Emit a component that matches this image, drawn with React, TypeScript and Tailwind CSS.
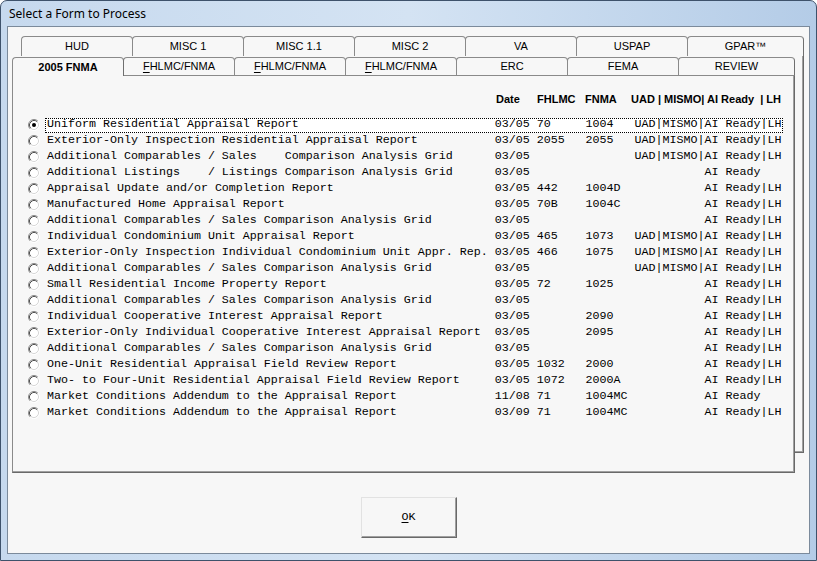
import React from 'react';

type Row = {
  name: string;
  date: string;
  fhlmc: string;
  fnma: string;
  uad: boolean;
  lh: boolean;
};

const rows: Row[] = [
  { name: 'Uniform Residential Appraisal Report', date: '03/05', fhlmc: '70', fnma: '1004', uad: true, lh: true },
  { name: 'Exterior-Only Inspection Residential Appraisal Report', date: '03/05', fhlmc: '2055', fnma: '2055', uad: true, lh: true },
  { name: 'Additional Comparables / Sales    Comparison Analysis Grid', date: '03/05', fhlmc: '', fnma: '', uad: true, lh: true },
  { name: 'Additional Listings    / Listings Comparison Analysis Grid', date: '03/05', fhlmc: '', fnma: '', uad: false, lh: false },
  { name: 'Appraisal Update and/or Completion Report', date: '03/05', fhlmc: '442', fnma: '1004D', uad: false, lh: true },
  { name: 'Manufactured Home Appraisal Report', date: '03/05', fhlmc: '70B', fnma: '1004C', uad: false, lh: true },
  { name: 'Additional Comparables / Sales Comparison Analysis Grid', date: '03/05', fhlmc: '', fnma: '', uad: false, lh: true },
  { name: 'Individual Condominium Unit Appraisal Report', date: '03/05', fhlmc: '465', fnma: '1073', uad: true, lh: true },
  { name: 'Exterior-Only Inspection Individual Condominium Unit Appr. Rep.', date: '03/05', fhlmc: '466', fnma: '1075', uad: true, lh: true },
  { name: 'Additional Comparables / Sales Comparison Analysis Grid', date: '03/05', fhlmc: '', fnma: '', uad: true, lh: true },
  { name: 'Small Residential Income Property Report', date: '03/05', fhlmc: '72', fnma: '1025', uad: false, lh: true },
  { name: 'Additional Comparables / Sales Comparison Analysis Grid', date: '03/05', fhlmc: '', fnma: '', uad: false, lh: true },
  { name: 'Individual Cooperative Interest Appraisal Report', date: '03/05', fhlmc: '', fnma: '2090', uad: false, lh: true },
  { name: 'Exterior-Only Individual Cooperative Interest Appraisal Report', date: '03/05', fhlmc: '', fnma: '2095', uad: false, lh: true },
  { name: 'Additional Comparables / Sales Comparison Analysis Grid', date: '03/05', fhlmc: '', fnma: '', uad: false, lh: true },
  { name: 'One-Unit Residential Appraisal Field Review Report', date: '03/05', fhlmc: '1032', fnma: '2000', uad: false, lh: true },
  { name: 'Two- to Four-Unit Residential Appraisal Field Review Report', date: '03/05', fhlmc: '1072', fnma: '2000A', uad: false, lh: true },
  { name: 'Market Conditions Addendum to the Appraisal Report', date: '11/08', fhlmc: '71', fnma: '1004MC', uad: false, lh: false },
  { name: 'Market Conditions Addendum to the Appraisal Report', date: '03/09', fhlmc: '71', fnma: '1004MC', uad: false, lh: true },
];

// every row is one fixed-width line, like the old list box
const toLine = (r: Row) =>
  r.name.padEnd(64) +
  r.date +
  ' ' +
  r.fhlmc.padEnd(7) +
  r.fnma.padEnd(7) +
  (r.uad ? 'UAD|MISMO|' : ' '.repeat(10)) +
  'AI Ready' +
  (r.lh ? '|LH' : '');

const Radio: React.FC<{ checked?: boolean }> = ({ checked }) => (
  <svg width="12" height="12" viewBox="0 0 12 12" className="shrink-0">
    <circle cx="6" cy="6" r="4.5" fill="#ffffff" />
    <path d="M2.11 9.89 A5.5 5.5 0 0 1 9.89 2.11" fill="none" stroke="#8a8a8a" strokeWidth="1" />
    <path d="M9.89 2.11 A5.5 5.5 0 0 1 2.11 9.89" fill="none" stroke="#ffffff" strokeWidth="1" />
    <path d="M2.82 9.18 A4.5 4.5 0 0 1 9.18 2.82" fill="none" stroke="#505050" strokeWidth="1" />
    <path d="M9.18 2.82 A4.5 4.5 0 0 1 2.82 9.18" fill="none" stroke="#d8d8d8" strokeWidth="1" />
    {checked && <circle cx="6" cy="6" r="2" fill="#000000" />}
  </svg>
);

const Mn: React.FC<{ c: string }> = ({ c }) => (
  <span className="underline underline-offset-2">{c}</span>
);

const backTabs: React.ReactNode[] = ['HUD', 'MISC 1', 'MISC 1.1', 'MISC 2', 'VA', 'USPAP', 'GPAR™'];

const frontTabs: React.ReactNode[] = [
  '2005 FNMA',
  <><Mn c="F" />HLMC/FNMA</>,
  <><Mn c="F" />HLMC/FNMA</>,
  <><Mn c="F" />HLMC/FNMA</>,
  'ERC',
  'FEMA',
  'REVIEW',
];

const App: React.FC = () => {
  return (
    <div className="w-[817px] h-[561px] flex flex-col border border-[#3e526b] rounded-t-[7px] bg-gradient-to-r from-[#c6d9ee] via-[#d4e3f3] to-[#b4cce7] font-['Liberation_Sans',Arial,sans-serif] text-black overflow-hidden">
      {/* title bar */}
      <div className="h-[25px] flex items-center pl-[8px] text-[12px] font-['Noto_Sans','Open_Sans',sans-serif] text-black">
        Select a Form to Process
      </div>

      {/* client area */}
      <div className="flex-1 mx-[6px] mb-[6px] border border-[#7b8a9b] bg-[#f7f7f7] flex flex-col">
        <div className="mt-[9px] ml-[4px] w-[792px] h-[437px] grid">
          {/* back tab row with its page behind */}
          <div className="[grid-area:1/1] ml-[9px] mb-[20px] flex flex-col">
            <div className="flex h-[20px]">
              {backTabs.map((t, i) => (
                <div
                  key={i}
                  className={`${i === backTabs.length - 1 ? 'flex-1' : 'w-[112px] -mr-px'} h-[20px] border border-b-0 border-[#8a8a8a] border-r-[#6f6f6f] rounded-t-[4px] bg-[#f7f7f7] flex items-center justify-center text-[11px] pb-px`}
                >
                  {t}
                </div>
              ))}
            </div>
            <div className="flex-1 border-r border-b border-[#696969] shadow-[inset_-1px_-1px_0_#a0a0a0]" />
          </div>

          {/* front tab row and the active page */}
          <div className="[grid-area:1/1] mt-[20px] mr-[9px] flex flex-col">
            <div className="flex h-[20px] items-end">
              {frontTabs.map((t, i) => {
                const selected = i === 0;
                return (
                  <div
                    key={i}
                    className={`${i === frontTabs.length - 1 ? 'flex-1' : 'w-[112px] -mr-px'} h-[19px] border border-[#8a8a8a] border-r-[#6f6f6f] rounded-t-[4px] bg-[#f7f7f7] flex items-center justify-center text-[11px] ${selected ? 'border-b-0 font-bold relative z-10 pt-px' : 'border-b-[#8a8a8a]'}`}
                  >
                    {t}
                  </div>
                );
              })}
            </div>
            <div className="flex-1 bg-[#f7f7f7] border-l border-l-[#8a8a8a] border-r border-b border-r-[#696969] border-b-[#696969] shadow-[inset_-1px_-1px_0_#a0a0a0] pt-[15px] pl-[15px]">
              <div className="h-[16px] flex items-center text-[11px] font-bold whitespace-pre">
                <span className="ml-[468px] w-[41px]">Date</span>
                <span className="w-[48px]">FHLMC</span>
                <span className="w-[46px]">FNMA</span>
                <span>UAD | MISMO| AI Ready  | LH</span>
              </div>
              <div className="mt-[10px] flex flex-col">
                {rows.map((r, i) => {
                  const selected = i === 0;
                  return (
                    <div key={i} className="h-[16px] flex items-center">
                      <Radio checked={selected} />
                      <span
                        className={`ml-[5px] h-[15px] px-px flex items-center whitespace-pre font-['Liberation_Mono','DejaVu_Sans_Mono',monospace] text-[11.67px] leading-none border border-dotted ${selected ? 'border-black bg-white' : 'border-transparent'}`}
                      >
                        {toLine(r)}
                      </span>
                    </div>
                  );
                })}
              </div>
            </div>
          </div>
        </div>

        <button
          type="button"
          className="mt-[24px] mx-auto w-[96px] h-[41px] bg-[#f7f7f7] border border-t-[#e2e2e2] border-l-[#e2e2e2] border-r-[#696969] border-b-[#696969] shadow-[inset_-1px_-1px_0_#a0a0a0] flex items-center justify-center font-['Liberation_Mono','DejaVu_Sans_Mono',monospace] text-[11.67px]"
        >
          <Mn c="O" />K
        </button>
      </div>
    </div>
  );
};

export default App;
